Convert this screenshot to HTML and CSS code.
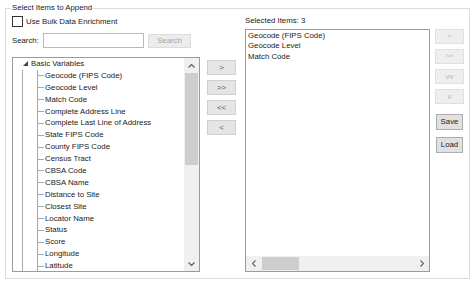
FILE: index.html
```html
<!DOCTYPE html>
<html>
<head>
  <meta charset="utf-8">
  <title>Select Items to Append</title>
  <link rel="stylesheet" href="styles.css">
</head>
<body>
<fieldset class="group">
  <legend class="group__title">Select Items to Append</legend>
  <div class="group__body">

    <div class="col-left">
      <label class="check-row"><span class="checkbox"></span>Use Bulk Data Enrichment</label>
      <div class="search-row">
        <span class="search-row__label">Search:</span>
        <input class="search-row__input" type="text">
        <button class="btn btn_search" disabled>Search</button>
      </div>
      <div class="tree">
        <div class="tree__body">
          <div class="tree__root">
            <span class="tree__expander"><svg width="5" height="5" viewBox="0 0 5 5"><polygon points="5,0 5,5 0,5" fill="#404040"/></svg></span>Basic Variables
          </div>
          <div class="tree__rail">
            <ul class="tree__children">
              <li>Geocode (FIPS Code)</li>
              <li>Geocode Level</li>
              <li>Match Code</li>
              <li>Complete Address Line</li>
              <li>Complete Last Line of Address</li>
              <li>State FIPS Code</li>
              <li>County FIPS Code</li>
              <li>Census Tract</li>
              <li>CBSA Code</li>
              <li>CBSA Name</li>
              <li>Distance to Site</li>
              <li>Closest Site</li>
              <li>Locator Name</li>
              <li>Status</li>
              <li>Score</li>
              <li>Longitude</li>
              <li>Latitude</li>
            </ul>
          </div>
        </div>
        <div class="vscroll">
          <div class="vscroll__arrow"><svg width="7" height="4" viewBox="0 0 7 4"><polyline points="0.5,3.5 3.5,0.5 6.5,3.5" fill="none" stroke="#606060" stroke-width="1.2"/></svg></div>
          <div class="vscroll__track"><div class="vscroll__thumb"></div></div>
          <div class="vscroll__arrow"><svg width="7" height="4" viewBox="0 0 7 4"><polyline points="0.5,0.5 3.5,3.5 6.5,0.5" fill="none" stroke="#606060" stroke-width="1.2"/></svg></div>
        </div>
      </div>
    </div>

    <div class="col-move">
      <button class="btn btn_move">&gt;</button>
      <button class="btn btn_move">&gt;&gt;</button>
      <button class="btn btn_move">&lt;&lt;</button>
      <button class="btn btn_move">&lt;</button>
    </div>

    <div class="col-right">
      <div class="selected-label">Selected Items: 3</div>
      <div class="listbox">
        <ul class="listbox__items">
          <li>Geocode (FIPS Code)</li>
          <li>Geocode Level</li>
          <li>Match Code</li>
        </ul>
        <div class="hscroll">
          <div class="hscroll__arrow"><svg width="4" height="7" viewBox="0 0 4 7"><polyline points="3.5,0.5 0.5,3.5 3.5,6.5" fill="none" stroke="#606060" stroke-width="1.2"/></svg></div>
          <div class="hscroll__track"><div class="hscroll__thumb"></div></div>
          <div class="hscroll__arrow"><svg width="4" height="7" viewBox="0 0 4 7"><polyline points="0.5,0.5 3.5,3.5 0.5,6.5" fill="none" stroke="#606060" stroke-width="1.2"/></svg></div>
        </div>
      </div>
    </div>

    <div class="col-order">
      <button class="btn btn_off" disabled>^</button>
      <button class="btn btn_off" disabled>^^</button>
      <button class="btn btn_off" disabled>vv</button>
      <button class="btn btn_off" disabled>v</button>
      <button class="btn btn_file btn_save">Save</button>
      <button class="btn btn_file">Load</button>
    </div>

  </div>
</fieldset>
</body>
</html>
```

FILE: styles.css
```css
body {
  margin: 0;
  background: #fff;
  font-family: "Liberation Sans", Arial, sans-serif;
  font-size: 7.8px;
  color: #1a1a1a;
}

ul {
  list-style: none;
  margin: 0;
  padding: 0;
}

.group {
  box-sizing: border-box;
  width: 465px;
  min-width: 0;
  margin: 3px 0 0 5px;
  padding: 0 4px 6px 6px;
  border: 1px solid #dcdcdc;
}

.group__title {
  padding: 0 1px;
  margin-left: -1px;
  line-height: 10px;
}

.group__body {
  display: flex;
  align-items: flex-start;
}

/* left column */
.col-left {
  width: 188px;
  display: flex;
  flex-direction: column;
}

.check-row {
  display: flex;
  align-items: center;
  height: 12px;
  margin-top: 2px;
}

.checkbox {
  box-sizing: border-box;
  width: 11px;
  height: 11px;
  border: 1px solid #333;
  background: #fff;
  margin-right: 3px;
}

.search-row {
  display: flex;
  align-items: center;
  margin-top: 6px;
  height: 15px;
}

.search-row__label {
  width: 31px;
}

.search-row__input {
  box-sizing: border-box;
  width: 101px;
  height: 15px;
  margin: 0;
  padding: 0;
  border: 1px solid #b9b9b9;
  outline: none;
}

.btn {
  box-sizing: border-box;
  margin: 0;
  padding: 0;
  font-family: inherit;
  font-size: 7.8px;
  border: 1px solid #adadad;
  background: #e1e1e1;
  color: #333;
  line-height: 1;
}

.btn_search {
  width: 43px;
  height: 14px;
  margin-left: 4px;
  background: #ececec;
  border-color: #dcdcdc;
  color: #a3a3a3;
}

.tree {
  box-sizing: border-box;
  display: flex;
  height: 215px;
  margin-top: 9px;
  border: 1px solid #9b9b9b;
  background: #fff;
}

.tree__body {
  flex: 1;
  overflow: hidden;
  line-height: 11.9px;
}

.tree__root {
  display: flex;
  align-items: center;
  height: 11.9px;
  padding-left: 9px;
}

.tree__expander {
  display: flex;
  align-items: center;
  justify-content: center;
  width: 7px;
  margin-right: 2px;
}

.tree__rail {
  margin-left: 9px;
  padding-left: 14px;
  border-left: 1px solid #a8a8a8;
}

.tree__children {
  border-left: 1px solid #a8a8a8;
}

.tree__children li {
  height: 11.9px;
  white-space: nowrap;
}

.tree__children li::before {
  content: "";
  display: inline-block;
  width: 6px;
  border-top: 1px solid #a8a8a8;
  vertical-align: middle;
  margin-right: 1px;
}

.vscroll {
  width: 15px;
  display: flex;
  flex-direction: column;
  background: #f0f0f0;
}

.vscroll__arrow {
  height: 15px;
  display: flex;
  align-items: center;
  justify-content: center;
}

.vscroll__track {
  flex: 1;
}

.vscroll__thumb {
  margin: 0 1px;
  height: 92px;
  background: #cdcdcd;
}

/* move buttons */
.col-move {
  display: flex;
  flex-direction: column;
  gap: 5px;
  width: 29px;
  margin-left: 7px;
  padding-top: 47px;
}

.btn_move {
  width: 29px;
  height: 15px;
  background: #e5e5e5;
  border-color: #cfcfcf;
  color: #555;
}

/* selected items */
.col-right {
  width: 185px;
  margin-left: 9px;
}

.selected-label {
  height: 16px;
  padding-top: 3px;
  box-sizing: border-box;
  line-height: 10px;
}

.listbox {
  box-sizing: border-box;
  height: 243px;
  border: 1px solid #9b9b9b;
  display: flex;
  flex-direction: column;
}

.listbox__items {
  flex: 1;
  padding: 1px 0 0 2px;
  line-height: 10.3px;
}

.hscroll {
  height: 15px;
  display: flex;
  background: #f0f0f0;
}

.hscroll__arrow {
  width: 15px;
  display: flex;
  align-items: center;
  justify-content: center;
}

.hscroll__track {
  flex: 1;
  display: flex;
  align-items: stretch;
  padding: 1px 0;
}

.hscroll__thumb {
  width: 37px;
  margin-left: 1px;
  background: #cdcdcd;
}

/* order buttons */
.col-order {
  display: flex;
  flex-direction: column;
  gap: 5px;
  width: 29px;
  margin-left: 5px;
  padding-top: 16px;
}

.btn_off {
  width: 29px;
  height: 15px;
  background: #eeeeee;
  border-color: #e0e0e0;
  color: #b4b4b4;
}

.btn_file {
  width: 27px;
  height: 16px;
  margin-left: 1px;
  color: #222;
}

.btn_save {
  margin-top: 5px;
  margin-bottom: 2px;
}
```
